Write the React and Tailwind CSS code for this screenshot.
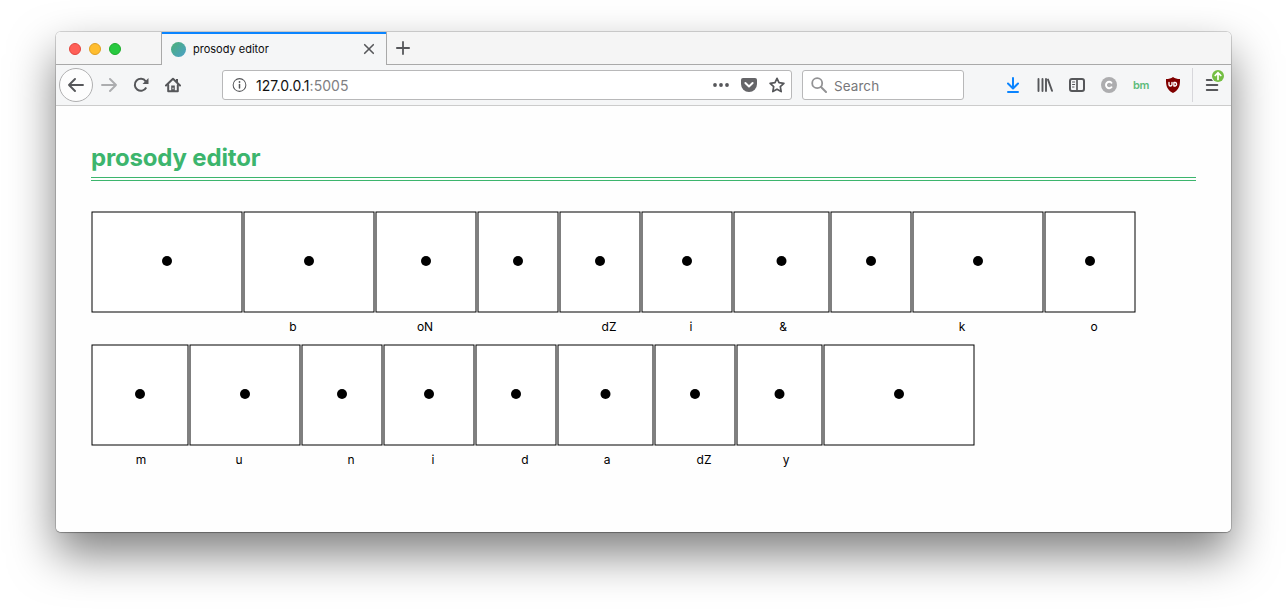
const rows = [
  [[152, ""], [132, "b"], [102, "oN"], [82, ""], [82, "dZ"], [92, "i"], [97, "&"], [82, ""], [132, "k"], [92, "o"]],
  [[98, "m"], [112, "u"], [82, "n"], [92, "i"], [82, "d"], [97, "a"], [82, "dZ"], [87, "y"], [152, ""]],
];

function Cell({ width, label }) {
  return (
    <div className="h-[133px] shrink-0" style={{ width }}>
      <svg width={width} height="102" className="block">
        <rect x="1" y="1" width={width - 2} height="100" fill="#fff" stroke="#000" strokeWidth="1" />
        <circle cx={width / 2} cy="50" r="5" fill="#000" />
      </svg>
      <div className="w-[100px] pt-[5px] text-center text-[12px] leading-[18px] text-black">{label}</div>
    </div>
  );
}

function Icon({ children, className = "" }) {
  return (
    <svg width="16" height="16" viewBox="0 0 16 16" fill="none" stroke="#56575a" strokeWidth="2" strokeLinecap="round" strokeLinejoin="round" className={`shrink-0 ${className}`}>
      {children}
    </svg>
  );
}

function TabStrip() {
  return (
    <div className="flex h-[33px] bg-[#f5f5f5]">
      <div className="flex w-[106px] items-center gap-2 border-r border-b border-[#a9a9a9] pt-0.5 pl-[13px]">
        <span className="size-3 rounded-full border border-[#e2463f] bg-[#ff5f57]" />
        <span className="size-3 rounded-full border border-[#dfa023] bg-[#ffbd2e]" />
        <span className="size-3 rounded-full border border-[#1dad2b] bg-[#28c940]" />
      </div>
      <div className="flex w-[224px] items-center border-t-2 border-[#0a84ff] bg-[#f5f6f7] pl-[9px] pr-[11px]">
        <span className="size-[15px] rounded-full bg-linear-to-br from-[#4caf72] to-[#4d9fc9]" />
        <span className="ml-[7px] text-[11px] tracking-[0] text-[#0c0c0d]">prosody editor</span>
        <svg width="12" height="12" viewBox="0 0 12 12" className="mb-px ml-auto" stroke="#56575a" strokeWidth="1.6" strokeLinecap="round">
          <path d="M1.7 1.7l8.6 8.6M10.3 1.7l-8.6 8.6" />
        </svg>
      </div>
      <div className="flex flex-1 items-center border-b border-l border-[#a9a9a9] pl-[9px]">
        <svg width="14" height="14" viewBox="0 0 14 14" stroke="#56575a" strokeWidth="1.8" strokeLinecap="round">
          <path d="M7 .9v12.2M.9 7h12.2" />
        </svg>
      </div>
    </div>
  );
}

function NavBar() {
  return (
    <div className="flex h-[41px] items-center border-b border-[#cccccc] bg-[#f5f6f7]">
      <div className="ml-[3px] flex size-[34px] items-center justify-center rounded-full border border-[#b0b0b1] bg-[#fdfdfd]">
        <Icon><path d="M1 8h14M7 2L1 8l6 6" strokeWidth="1.9" /></Icon>
      </div>
      <Icon className="ml-2 opacity-45"><path d="M1 8h14M9 2l6 6-6 6" strokeWidth="1.9" /></Icon>
      <Icon className="ml-4">
        <path d="M13.2 10.5A6 6 0 1 1 12.7 4.3" strokeLinecap="butt" />
        <path d="M15.5 1v6h-6z" fill="#56575a" stroke="none" />
      </Icon>
      <Icon className="ml-4">
        <path d="M1 8.5L8 1.7l7 6.8" />
        <path d="M3.2 8v6.2h9.6V8" />
        <path d="M6.2 8.5h3.6V14H6.2z" fill="#56575a" stroke="none" />
        <path d="M12 2v3" strokeLinecap="butt" />
        <path d="M8 11.1v.8" stroke="#fff" strokeWidth="1" />
      </Icon>

      <div className="ml-[41px] flex h-[30px] w-[570px] items-center rounded-[3px] border border-[#b8b8b9] bg-white pl-[9px] pr-1.5">
        <Icon className="w-[15px]">
          <circle cx="8" cy="8" r="6.8" strokeWidth="1.1" />
          <path d="M8 7.5v3.6" strokeWidth="1.6" />
          <path d="M8 4.7v.1" strokeWidth="1.9" />
        </Icon>
        <div className="ml-[9px] pt-[2px] text-[14px] leading-4 tracking-[0.003em] text-[#111]">127.0.0.1<span className="text-[#808083]">:5005</span></div>
        <Icon className="ml-auto">
          <g fill="#56575a" stroke="none"><circle cx="2" cy="8" r="1.9" /><circle cx="8" cy="8" r="1.9" /><circle cx="14" cy="8" r="1.9" /></g>
        </Icon>
        <Icon className="ml-3">
          <path d="M2 1h12q2 0 2 2v4a8 8 0 0 1-16 0V3q0-2 2-2z" fill="#656568" stroke="none" />
          <path d="M4.4 6L8 9.4 11.6 6" stroke="#fff" />
        </Icon>
        <Icon className="ml-3">
          <path d="M8 1.3l2 4.4 4.9.6-3.6 3.3.9 5L8 12.2l-4.2 2.4.9-5L1.1 6.3 6 5.7z" strokeWidth="1.7" />
        </Icon>
      </div>

      <div className="ml-[10px] flex h-[30px] w-[162px] items-center rounded-[3px] border border-[#b8b8b9] bg-white pl-2">
        <Icon>
          <circle cx="6.2" cy="6.2" r="5" stroke="#929294" strokeWidth="1.8" />
          <path d="M10 10l5 5" stroke="#929294" />
        </Icon>
        <span className="ml-[7px] pt-[2px] text-[13.5px] leading-4 tracking-[0.005em] text-[#77777a]">Search</span>
      </div>

      <div className="ml-[41px] flex h-full items-center gap-4">
        <Icon><path d="M8 1v10M3 6.5l5 5 5-5M3 15h10" stroke="#0a84ff" /></Icon>
        <Icon><path d="M1.500 2v12M5.500 2v12M9 2v12M11 2.600L15 13.800" strokeWidth="1.9" /></Icon>
        <Icon>
          <rect x="1" y="2" width="14" height="12" rx="2" />
          <path d="M8 2v12" strokeWidth="1.7" />
          <path d="M3.5 5h2.2M3.5 7.5h2.2M3.5 10h1.5" strokeWidth="1" />
        </Icon>
        <Icon>
          <circle cx="8" cy="8" r="8" fill="#adadaf" stroke="none" />
          <path d="M10.5 5.8a3.2 3.2 0 1 0 0 4.4" stroke="#fff" strokeWidth="1.9" />
        </Icon>
        <span className="flex w-4 justify-center text-[11px] leading-4 font-semibold tracking-[-0.04em] text-[#5dbb7b]">bm</span>
        <Icon>
          <path d="M8 0c2 1.500 4.200 2 7 2 .1 6-.4 10.500-7 14C1.400 12.500.9 8 1 2c2.800 0 5-.5 7-2z" fill="#800000" stroke="none" />
          <path d="M4 5.500v2a1.500 1.500 0 0 0 3 0v-2" stroke="#fff" strokeWidth="1.400" />
          <path d="M8.900 5.500h1.300a1.800 1.800 0 0 1 0 3.500H8.900z" stroke="#fff" strokeWidth="1.400" />
        </Icon>
      </div>
      <div className="relative ml-[11px] flex h-[34px] items-center border-l border-[#d7d7db] pl-[11px]">
        <Icon><path d="M2.800 3h11M2.800 8h10.500M2.800 13h10.500" strokeWidth="2" /></Icon>
        <svg width="14" height="14" viewBox="0 0 14 14" className="absolute top-px left-[18px]">
          <circle cx="7" cy="7" r="7" fill="#f5f6f7" />
          <circle cx="7" cy="7" r="6" fill="#74be43" />
          <path d="M7 10.500V4M4.200 6.500L7 3.800l2.800 2.700" fill="none" stroke="#fff" strokeWidth="1.700" strokeLinecap="round" />
        </svg>
      </div>
    </div>
  );
}

export default function App() {
  return (
    <div className="h-[612px] w-[1287px] overflow-hidden bg-white pt-[32px] pl-[56px] font-['Inter','Liberation_Sans',sans-serif]">
      <div className="h-[500px] w-[1175px] rounded-[5px] shadow-[0_0_0_1px_rgba(0,0,0,0.15),0_1px_1px_rgba(0,0,0,0.2),0_22px_46px_rgba(0,0,0,0.5)]">
        <div className="h-full overflow-hidden rounded-[5px] bg-[#fefefe]">
          <TabStrip />
          <NavBar />
          <main className="px-[35px] pt-[35px]">
            <h1 className="h-[40px] border-b-4 border-double border-[#3cb56d] pt-[3px] text-[24px] leading-[28px] font-bold tracking-[-0.007em] text-[#3cb56d]">prosody editor</h1>
            <div className="pt-[30px]">
              {rows.map((row, r) => (
                <div key={r} className="flex">
                  {row.map(([width, label], i) => <Cell key={i} width={width} label={label} />)}
                </div>
              ))}
            </div>
          </main>
        </div>
      </div>
    </div>
  );
}
